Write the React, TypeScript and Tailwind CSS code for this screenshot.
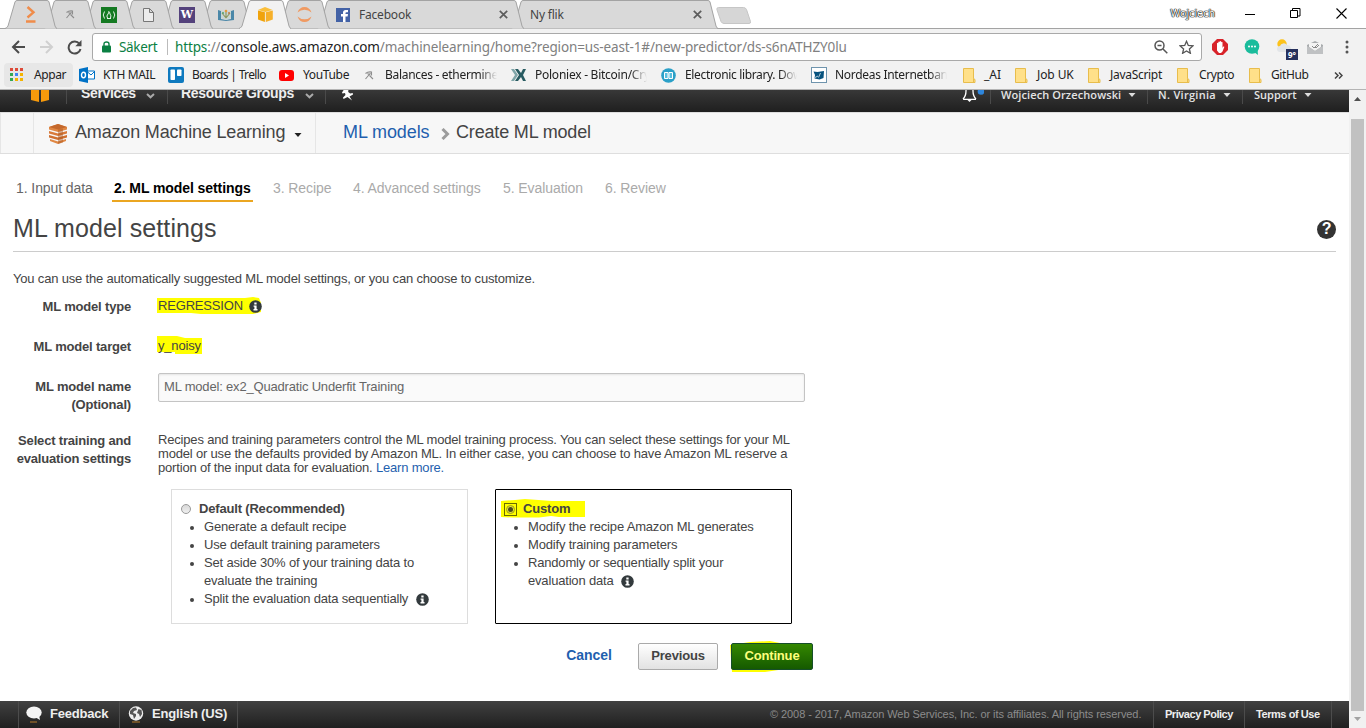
import type { ReactNode } from "react";

const UI = "font-['Noto_Sans','Open_Sans',sans-serif]";

function TabShape({ w, active }: { w: number; active?: boolean }) {
  return (
    <svg className="absolute left-0 top-0" width={w} height={29} viewBox={`0 0 ${w} 29`}>
      <path
        d={`M0 28.5 Q2 28 3 26 L10 2 Q10.5 0.5 12 0.5 H${w - 10} Q${w - 8.5} 0.5 ${w - 8} 2 L${w - 2} 26 Q${w - 1} 28.5 ${w} 28.5`}
        fill={active ? "#f2f2f2" : "#d9d9d9"}
        stroke="#a3a3a3"
      />
      {active && <rect x="1" y="28" width={w - 2} height="1" fill="#f2f2f2" />}
    </svg>
  );
}

function SmallTab({ z, active, children }: { z: string; active?: boolean; children: ReactNode }) {
  return (
    <div className={`relative -mr-[13px] h-[29px] w-[52px] shrink-0 ${z}`}>
      <TabShape w={52} active={active} />
      <div className="relative flex h-[29px] items-center justify-center">{children}</div>
    </div>
  );
}

function WideTab({ z, icon, title }: { z: string; icon?: ReactNode; title: string }) {
  return (
    <div className={`relative -mr-[13px] h-[29px] w-[207px] shrink-0 ${z}`}>
      <TabShape w={207} />
      <div className="relative flex h-[29px] items-center pl-[19px] pr-[16px]">
        {icon && <span className="mr-[7px] flex w-4">{icon}</span>}
        <span className="flex-1 text-[12px] tracking-[-0.2px] text-[#444]">{title}</span>
        <svg width="9" height="9" viewBox="0 0 9 9" stroke="#5c5c5c" strokeWidth="1.7">
          <path d="M.8.8l7.4 7.4M8.2.8L.8 8.2" />
        </svg>
      </div>
    </div>
  );
}

function Pickaxe() {
  return (
    <svg width="9" height="9" viewBox="0 0 9 9" fill="none" stroke="#8d8d8d" strokeWidth="1.1">
      <path d="M.5 2.500Q3 .5 6.500 1v3.500M5.500 2L.5 8M2.500 2.500l3 2M4.500 4.500L8 8" />
    </svg>
  );
}

function Folder() {
  return (
    <svg width="14" height="15" viewBox="0 0 14 15" className="ml-[2px]">
      <path d="M.5.500h10v10l1.500 1v3H.5z" fill="#ffe089" stroke="#e8bd4c" />
      <path d="M10.500 10.500v3.500" stroke="#e8bd4c" />
    </svg>
  );
}

function Bookmark({ w, icon, label, track = "", fade }: { w: string; icon: ReactNode; label: string; track?: string; fade?: boolean }) {
  return (
    <div className={`flex h-full shrink-0 items-center ${w}`}>
      <span className="flex w-6 shrink-0 items-center">{icon}</span>
      <span
        className={`whitespace-nowrap text-[12px] text-[#222] ${track} ${
          fade ? "w-[112px] overflow-hidden [mask-image:linear-gradient(to_right,#000_85%,transparent)]" : ""
        }`}
      >
        {label}
      </span>
    </div>
  );
}

function AppGrid() {
  const colors = ["#dd4b39", "#dd4b39", "#dd4b39", "#34a853", "#4285f4", "#f4b400", "#34a853", "#f4b400", "#f4b400"];
  return (
    <svg width="14" height="14" viewBox="0 0 14 14">
      {colors.map((c, i) => (
        <rect key={i} x={(i % 3) * 5} y={Math.floor(i / 3) * 5} width="3" height="3" fill={c} />
      ))}
    </svg>
  );
}

function Info() {
  return (
    <svg width="13" height="13" viewBox="0 0 13 13">
      <circle cx="6.500" cy="6.500" r="6.300" fill="#333a3d" />
      <rect x="5.300" y="2.500" width="2.300" height="2" fill="#fff" />
      <path d="M4.600 5.400h3v3.700h.9v1.300H4.500V9.100h.9V6.700h-.8z" fill="#fff" />
    </svg>
  );
}

function Chevron() {
  return (
    <svg width="9" height="6" viewBox="0 0 9 6" fill="none" stroke="#aaa" strokeWidth="2">
      <path d="M1 1l3.500 3.300L8 1" />
    </svg>
  );
}

function Caret({ color = "#ddd" }: { color?: string }) {
  return (
    <svg width="8" height="4" viewBox="0 0 8 4" fill={color}>
      <path d="M.5 0h7L4 4z" />
    </svg>
  );
}

function NavDivider() {
  return <div className="h-[14px] w-px shrink-0 self-start bg-[#4a4a4a]" />;
}

function TabStrip() {
  return (
    <div className="relative flex h-[29px] items-start bg-white pl-[5px] shadow-[inset_0_-1px_0_#a3a3a3]">
      <SmallTab z="z-[9]">
        <svg width="12" height="17" viewBox="0 0 12 17" fill="none" stroke="#f08c4a" strokeWidth="2.400">
          <path d="M2.500 1l6 5.300-6 5.200M1 15.500h9.500" />
        </svg>
      </SmallTab>
      <SmallTab z="z-[8]"><Pickaxe /></SmallTab>
      <SmallTab z="z-[7]">
        <svg width="16" height="16" viewBox="0 0 16 16" fill="none" stroke="#fff" strokeWidth=".9">
          <rect width="16" height="16" fill="#157a22" stroke="none" />
          <path d="M3.500 4.500Q1 8 3.500 11.500M12.500 4.500q2.500 3.500 0 7M6 11.500h4M6.500 11Q5 9 7 7q1-1 .8-2.500Q9 5.500 9 7q1.500 1.500.5 4" />
        </svg>
      </SmallTab>
      <SmallTab z="z-[6]">
        <svg width="11" height="14" viewBox="0 0 11 14" fill="#ececec" stroke="#777" className="ml-px">
          <path d="M.5.500h6l4 4v9H.5zM6.500.500v4h4" />
        </svg>
      </SmallTab>
      <SmallTab z="z-[5]">
        <span className="flex h-4 w-4 items-center justify-center bg-[#54427c] font-['DejaVu_Serif',serif] text-[11px] font-bold leading-4 text-white">W</span>
      </SmallTab>
      <SmallTab z="z-[4]">
        <svg width="16" height="12" viewBox="0 0 16 12">
          <path d="M0 1l3 1v8l5 1 5-1V2l3-1v10l-8 1-8-1z" fill="#4a87a8" />
          <path d="M3 1l5 2 5-2v8l-5 2-5-2z" fill="#c9d6d4" />
          <path d="M8 9L4 4M8 9l4-5M8 9V3" stroke="#8e9a64" strokeWidth="1.200" />
          <circle cx="8" cy="2" r="1.300" fill="#e59a3a" />
          <circle cx="5" cy="4" r="1" fill="#5a9f6a" />
          <circle cx="11" cy="4" r="1" fill="#c27648" />
        </svg>
      </SmallTab>
      <SmallTab z="z-[10]" active>
        <svg width="15" height="15" viewBox="0 0 15 15">
          <path d="M0 3l7-3 7.500 3-7.200 2z" fill="#fbbf3a" />
          <path d="M0 3.500l6.900 1.700V15L0 12.500z" fill="#f0a30c" />
          <path d="M7.800 5.200l7-1.700v9l-7 2.500z" fill="#f6b02a" />
        </svg>
      </SmallTab>
      <SmallTab z="z-[3]">
        <svg width="15" height="15" viewBox="0 0 15 15" fill="#f09a62">
          <path d="M.5 5.500Q2.500 0 7.500 0t7 5.500Q11.500 2.700 7.500 2.700T.5 5.500zM.5 9.500q3 2.800 7 2.800t7-2.800Q12.500 15 7.500 15T.5 9.500z" />
        </svg>
      </SmallTab>
      <WideTab
        z="z-[2]"
        title="Facebook"
        icon={
          <svg width="14" height="14" viewBox="0 0 14 14">
            <rect width="14" height="14" fill="#4362a6" />
            <path d="M7 14V8.500H5V6h2V4.500Q7 2 9.700 2H12v2.200h-1.500Q9.500 4.200 9.500 5v1H12l-.4 2.500H9.500V14z" fill="#fff" />
          </svg>
        }
      />
      <WideTab z="z-[1]" title="Ny flik" />
      <svg width="36" height="18" viewBox="0 0 36 18" className="ml-[11px] mt-[7px]">
        <path d="M2.500.500h25q2 0 3 2l4 12q.5 2-1.500 2H8q-2 0-3-2L.9 2.500Q.5.500 2.500.500z" fill="#d6d6d6" stroke="#c6c6c6" />
      </svg>
      <div className="flex h-[27px] flex-1 items-center justify-end pr-[19px]">
        <span className="mr-[30px] text-[10.500px] tracking-[0.1px] text-white [text-shadow:0_0_1px_#000,0_0_1px_#000,0_0_1px_#333,0_0_1px_#333]">Wojciech</span>
        <svg width="10" height="10" className="mr-[35px]"><path d="M0 5.500h10" stroke="#000" /></svg>
        <svg width="11" height="11" fill="none" stroke="#000" className="mr-[35px]">
          <path d="M.5 2.500h7v7h-7zM2.500 2.500v-2h7.500v7.500H8" />
        </svg>
        <svg width="11" height="11" stroke="#000" strokeWidth="1.100"><path d="M.5.500l10 10M10.500.500l-10 10" /></svg>
      </div>
    </div>
  );
}

function Toolbar() {
  return (
    <div className="flex h-[33px] items-center bg-[#f2f2f2] pl-[11px] pt-[3px]">
      <svg width="15" height="14" viewBox="0 0 15 14" fill="none" stroke="#4c4c4c" strokeWidth="2"><path d="M14 7H2M8 1L2 7l6 6" /></svg>
      <svg width="15" height="14" viewBox="0 0 15 14" fill="none" stroke="#d0d0d0" strokeWidth="2" className="ml-[13px]"><path d="M1 7h12M7 1l6 6-6 6" /></svg>
      <svg width="15" height="15" viewBox="0 0 15 15" fill="none" stroke="#4c4c4c" strokeWidth="2" className="ml-[13px]">
        <path d="M12.500 4A6 6 0 1 0 13.500 9" />
        <path d="M14.500 0v6.200H8.300z" fill="#4c4c4c" stroke="none" />
      </svg>
      <div className="ml-[10px] flex h-[28px] w-[1110px] shrink-0 items-center rounded-[3px] border border-[#a9a9a9] bg-white pl-[9px] pr-[7px] text-[13.500px]">
        <svg width="9" height="12" viewBox="0 0 9 12"><rect y="4.500" width="9" height="7" rx="1" fill="#0b8043" /><path d="M2 5V3Q2 1 4.500 1T7 3v2" fill="none" stroke="#0b8043" strokeWidth="1.400" /></svg>
        <span className="ml-[8px] w-[48px] whitespace-nowrap text-[#0b8043] tracking-[-0.35px]">Säkert</span>
        <span className="h-4 w-px bg-[#bbb]" />
        <span className="ml-[7px] flex-1 whitespace-nowrap tracking-[-0.13px] text-[#808080]">
          <span className="text-[#0b8043]">https</span>://<span className="text-[#222]">console.aws.amazon.com</span>/machinelearning/home?region=us-east-1#/new-predictor/ds-s6nATHZY0lu
        </span>
        <svg width="14" height="14" viewBox="0 0 14 14" fill="none" stroke="#555" strokeWidth="1.500"><circle cx="5.500" cy="5.500" r="4.500" /><path d="M9 9l4.300 4.300M3.500 5.500h4" /></svg>
        <svg width="15" height="14" viewBox="0 0 15 14" fill="none" stroke="#555" strokeWidth="1.300" className="ml-[11px]"><path d="M7.500 1.300l1.800 4.200 4.500.4-3.400 3 1 4.400-3.900-2.300-3.900 2.300 1-4.400-3.400-3 4.500-.4z" /></svg>
      </div>
      <svg width="16" height="16" viewBox="0 0 16 16" className="ml-[10px] shrink-0">
        <path d="M5 0h6l5 5v6l-5 5H5l-5-5V5z" fill="#d8232a" />
        <path d="M5 8V4.200q.7-.9 1.300 0V3q.7-.9 1.400 0v-.5q.8-.9 1.400 0V3.200q.8-.9 1.400 0V9l.7-1.500 1.200.3L10.500 12.500 9 14H7L5 11.500z" fill="#fff" />
      </svg>
      <svg width="16" height="16" viewBox="0 0 16 16" className="ml-[16px] shrink-0">
        <circle cx="8" cy="7.500" r="7.300" fill="#1abc9c" /><path d="M10 13l4 3-.5-5z" fill="#1abc9c" />
        <g fill="#fff"><circle cx="5" cy="7.500" r="1" /><circle cx="8" cy="7.500" r="1" /><circle cx="11" cy="7.500" r="1" /></g>
      </svg>
      <div className="relative ml-[16px] h-[20px] w-[22px] shrink-0">
        <svg width="16" height="14" viewBox="0 0 16 14" className="mt-[2px]">
          <circle cx="6" cy="5" r="4.700" fill="#fcc21b" /><path d="M4 13a3 3 0 0 1 0-6 4 4 0 0 1 7-1 3.700 3.700 0 0 1 2 7z" fill="#e2e5e8" />
        </svg>
        <span className="absolute left-[10px] top-[12px] flex h-[11px] w-[12px] items-center justify-center bg-[#26305c] text-[8px] font-bold leading-none text-white">9°</span>
      </div>
      <svg width="16" height="13" viewBox="0 0 16 13" className="ml-[9px] shrink-0">
        <path d="M0 4l8-4 8 4v9H0z" fill="#a9acae" /><path d="M2 2h12v4l-6 4-6-4z" fill="#f3f3f3" /><path d="M0 5l8 5 8-5v8H0z" fill="#bfc1c3" /><path d="M5 5l2 2 4-4M8 6l1 1 3-3" fill="none" stroke="#888" />
      </svg>
      <svg width="4" height="14" viewBox="0 0 4 14" fill="#555" className="ml-[22px] shrink-0"><circle cx="2" cy="2" r="1.500" /><circle cx="2" cy="7" r="1.500" /><circle cx="2" cy="12" r="1.500" /></svg>
    </div>
  );
}

function Bookmarks() {
  return (
    <div className="flex h-[28px] items-center border-b border-[#b4b4b4] bg-[#f2f2f2] pb-px pl-[4px]">
      <div className="mr-[6px] flex h-[24px] w-[69px] shrink-0 items-center rounded-sm bg-[#e7e7e7] pl-[6px]">
        <AppGrid /><span className="ml-[10px] text-[12px] text-[#222] tracking-[-0.4px]">Appar</span>
      </div>
      <Bookmark w="w-[89px]" label="KTH MAIL" track="tracking-[-0.35px]" icon={
        <svg width="16" height="16" viewBox="0 0 16 16"><path d="M8 4h7.500v8H8z" fill="#fff" stroke="#0072c6" /><path d="M8 4.500l4 3.500 3.500-3.500" fill="none" stroke="#0072c6" /><path d="M0 2l9-2v16l-9-2z" fill="#0072c6" /><ellipse cx="4.500" cy="8" rx="2" ry="2.700" fill="none" stroke="#fff" strokeWidth="1.400" /></svg>
      } />
      <Bookmark w="w-[111px]" label="Boards | Trello" track="tracking-[-0.65px]" icon={
        <svg width="16" height="16" viewBox="0 0 16 16"><rect width="16" height="16" rx="2" fill="#0f7abf" /><rect x="2.500" y="2.500" width="4.500" height="10.500" rx=".8" fill="#fff" /><rect x="9" y="2.500" width="4.500" height="6.500" rx=".8" fill="#fff" /></svg>
      } />
      <Bookmark w="w-[82px]" label="YouTube" track="tracking-[-0.35px]" icon={
        <svg width="15" height="11" viewBox="0 0 15 11"><rect width="15" height="11" rx="3" fill="#f00" /><path d="M6 3l4 2.500L6 8z" fill="#fff" /></svg>
      } />
      <Bookmark w="w-[150px]" label="Balances - ethermine" track="tracking-[-0.3px]" fade icon={<span className="ml-1"><Pickaxe /></span>} />
      <Bookmark w="w-[150px]" label="Poloniex - Bitcoin/Cry" track="tracking-[-0.25px]" fade icon={
        <svg width="16" height="12" viewBox="0 0 16 12" fill="#285b61"><path d="M0 0h3l4 6-4 6H0l4-6z" fill="#7fa5a8" /><path d="M4 0h3l3 4 2-4h3l-3 6 3 6h-3l-2-4-3 4H4l4-6z" /></svg>
      } />
      <Bookmark w="w-[150px]" label="Electronic library. Dow" track="tracking-[-0.35px]" fade icon={
        <svg width="15" height="15" viewBox="0 0 15 15"><circle cx="7.500" cy="7.500" r="7.300" fill="#2aa0c8" /><path d="M3.500 4.500h3.500v6H3.500zM8 4.500h3.500v6H8z" fill="#58bede" stroke="#fff" /></svg>
      } />
      <Bookmark w="w-[150px]" label="Nordeas Internetbank" track="tracking-[-0.3px]" fade icon={
        <svg width="16" height="16" viewBox="0 0 16 16"><rect x=".5" y=".5" width="15" height="15" fill="#fff" stroke="#6f94ad" /><path d="M2.500 4.500l4 .5 6.500-1-.5 7-4 1.500-5-1L4 8z" fill="#06527e" /><path d="M9.500 6l-2 4.500M4 10.500l3-1.500" stroke="#fff" strokeWidth=".7" /></svg>
      } />
      <Bookmark w="w-[52px]" label="_AI" track="-ml-px" icon={<Folder />} />
      <Bookmark w="w-[73px]" label="Job UK" track="tracking-[-0.1px]" icon={<Folder />} />
      <Bookmark w="w-[89px]" label="JavaScript" track="tracking-[-0.3px]" icon={<Folder />} />
      <Bookmark w="w-[72px]" label="Crypto" track="tracking-[-0.4px]" icon={<Folder />} />
      <Bookmark w="w-[87px]" label="GitHub" track="tracking-[-0.4px]" icon={<Folder />} />
      <svg width="9" height="7" viewBox="0 0 9 7" fill="none" stroke="#444" strokeWidth="1.500"><path d="M1 .5l3 3-3 3M5 .5l3 3-3 3" /></svg>
    </div>
  );
}

function AwsNav() {
  const right = "whitespace-nowrap text-[11px] font-semibold leading-[13px] text-[#e4e4e4] font-['Open_Sans',sans-serif]";
  return (
    <div className="h-[22px] overflow-hidden bg-gradient-to-b from-[#383838] to-[#1f1f1f]">
      <div className="-mt-[5px] flex h-[22px] items-start">
        <svg width="18" height="14" viewBox="0 0 18 14" className="ml-[31px] mt-[3px]"><path d="M0 0h8v14l-8-2zM10 0h8v12l-8 2z" fill="#f79a0b" /></svg>
        <div className="ml-[17px] mt-[5px]"><NavDivider /></div>
        <span className="ml-[14px] w-[55px] whitespace-nowrap text-[14px] font-bold leading-[17px] tracking-[-0.35px] text-[#eee]">Services</span>
        <span className="ml-[10px] mt-[8px]"><Chevron /></span>
        <div className="ml-[12px] mt-[5px]"><NavDivider /></div>
        <span className="ml-[13px] w-[113px] whitespace-nowrap text-[14px] font-bold leading-[17px] tracking-[-0.3px] text-[#eee]">Resource Groups</span>
        <span className="ml-[11px] mt-[8px]"><Chevron /></span>
        <div className="ml-[11px] mt-[5px]"><NavDivider /></div>
        <svg width="11" height="13" viewBox="0 0 11 13" fill="#fff" className="ml-[16px] mt-[3px]"><path d="M3 0l3.500 1-.3 3 2 1.500 2.500-.5.3 1.500-3.500 2L10 12.500 5.500 9 1.500 11 1 9.500 3.500 7 3 5 .5 5.500 0 4.500z" /></svg>
        <div className="flex-1" />
        <svg width="22" height="16" viewBox="0 0 22 16" fill="none" stroke="#fff" strokeWidth="1.300" className="mt-px">
          <path d="M1 13q3-3 3-8V0M14 13q-3-3-3-8V0M1 13.300h13" /><path d="M5.500 14h4l-2 2z" fill="#fff" stroke="none" /><circle cx="19" cy="5.500" r="3.300" fill="#2e86dd" stroke="none" />
        </svg>
        <div className="ml-[6px] mt-[5px]"><NavDivider /></div>
        <span className={`ml-[10px] w-[120px] pt-[3px] tracking-[0.1px] ${right}`}>Wojciech Orzechowski</span>
        <span className="ml-[7px] mt-[8px] flex"><Caret /></span>
        <div className="ml-[11px] mt-[5px]"><NavDivider /></div>
        <span className={`ml-[10px] w-[58px] pt-[3px] tracking-[0.3px] ${right}`}>N. Virginia</span>
        <span className="ml-[7px] mt-[8px] flex"><Caret /></span>
        <div className="ml-[11px] mt-[5px]"><NavDivider /></div>
        <span className={`ml-[11px] w-[43px] pt-[3px] ${right}`}>Support</span>
        <span className="ml-[7px] mr-[37px] mt-[8px] flex"><Caret /></span>
      </div>
    </div>
  );
}

function Breadcrumbs() {
  return (
    <div className="flex h-[42px] border-b border-t border-[#dedede] bg-[#f7f7f7] text-[18px] leading-[38px] text-[#444]">
      <div className="w-[34px] border-x border-[#e6e6e6]" />
      <div className="flex w-[282px] items-start border-r border-[#e6e6e6] pl-[15px]">
        <svg width="18" height="20" viewBox="0 0 18 20" className="mt-[11px]">
          <path d="M9 0l9 3v2.500L9 8 0 5.500V3z" fill="#e08743" /><path d="M9 0l9 3-9 2.500L0 3z" fill="#c4682c" />
          <path d="M0 7l9 2.500L18 7v2.500L9 12 0 9.500z" fill="#d97a3a" /><path d="M0 11l9 2.500 9-2.500v2.500L9 16l-9-2.500z" fill="#cf7030" /><path d="M1 15l8 2.500 8-2.500v2L9 20l-8-3z" fill="#e08743" /><path d="M9 5.500v14.500l5-1.500V4.500z" fill="#a8541d" opacity=".45" />
        </svg>
        <span className="ml-[8px] w-[211px] whitespace-nowrap tracking-[-0.17px]">Amazon Machine Learning</span>
        <span className="ml-[8px] mt-[20px] flex"><Caret color="#222" /></span>
      </div>
      <span className="ml-[27px] w-[87px] whitespace-nowrap tracking-[-0.1px] text-[#1f5fae]">ML models</span>
      <svg width="9" height="12" viewBox="0 0 9 12" className="ml-[11px] mt-[15px]" fill="none" stroke="#9c9c9c" strokeWidth="3"><path d="M1.500 1l5 5-5 5" /></svg>
      <span className="ml-[6px] whitespace-nowrap tracking-[-0.17px]">Create ML model</span>
    </div>
  );
}

function OptionCard({ title, active, children }: { title: string; active?: boolean; children: ReactNode }) {
  return (
    <div className={`h-[135px] w-[297px] border pl-[9px] pt-[10px] leading-[18px] ${active ? "rounded-[1px] border-black" : "border-[#ddd]"}`}>
      <div className="relative flex h-[18px] items-center">
        {active && (
          <svg className="absolute -left-[4px] -top-px" width="84" height="20" viewBox="0 0 84 20" fill="#ff0">
            <path d="M0 2l14-1L24 0l27 2h33v16H58l-8-1-12 1.500H12L0 18z" />
          </svg>
        )}
        {active ? (
          <span className="relative -ml-px flex h-[13px] w-[13px] items-center justify-center border border-[#6b6b00]">
            <span className="flex h-[9px] w-[9px] items-center justify-center rounded-full border border-[#a0a010] bg-[#e4e43a]"><span className="h-[5px] w-[5px] rounded-full bg-[#4a4a20]" /></span>
          </span>
        ) : (
          <span className="h-[10px] w-[10px] rounded-full border border-[#999] bg-gradient-to-b from-[#d8d8d8] to-[#f0f0f0]" />
        )}
        <span className={`relative font-bold ${active ? "ml-[6px]" : "ml-[8px]"}`}>{title}</span>
      </div>
      <ul className="pl-[23px]">{children}</ul>
    </div>
  );
}

function Item({ children }: { children: ReactNode }) {
  return (
    <li className="relative whitespace-nowrap">
      <span className="absolute -left-[14px] top-[8px] h-[4px] w-[4px] rounded-full bg-[#444]" />
      {children}
    </li>
  );
}

function Row({ label, h, children }: { label: ReactNode; h: string; children: ReactNode }) {
  return (
    <div className={`flex ${h}`}>
      <div className="w-[131px] shrink-0 whitespace-nowrap text-right font-bold leading-[18px]">{label}</div>
      <div className="ml-[27px] flex-1">{children}</div>
    </div>
  );
}

function Content() {
  const step = "h-[28px] whitespace-nowrap px-[2px] leading-[29px]";
  return (
    <div className="flex-1 pt-[20px] text-[13px] tracking-[-0.18px] text-[#444]">
      <div className="flex pl-[14px] text-[14px] tracking-[-0.08px] text-[#aaa]">
        <span className={`w-[98px] text-[#666] ${step}`}>1. Input data</span>
        <span className={`mr-[18px] w-[141px] border-b-2 border-[#eba621] font-bold text-black ${step}`}>2. ML model settings</span>
        <span className={`w-[80px] ${step}`}>3. Recipe</span>
        <span className={`w-[150px] ${step}`}>4. Advanced settings</span>
        <span className={`w-[102px] ${step}`}>5. Evaluation</span>
        <span className={step}>6. Review</span>
      </div>
      <div className="ml-[13px] mr-[13px] flex h-[50px] items-center border-b border-[#ccc]">
        <h1 className="flex-1 pt-[3px] text-[25px] leading-[30px] tracking-[0.1px]">ML model settings</h1>
        <span className="mt-[5px] flex h-[19px] w-[19px] items-center justify-center rounded-full bg-[#333] text-[16px] font-bold leading-none text-white">?</span>
      </div>
      <p className="ml-[13px] mt-[18px] h-[28px] leading-[18px]">You can use the automatically suggested ML model settings, or you can choose to customize.</p>
      <Row label="ML model type" h="h-[40px]">
        <div className="relative -mt-px flex h-[18px] items-center">
          <svg className="absolute -left-px top-0" width="106" height="17" fill="#ff0"><path d="M0 1h88l8-1 6 1 2 5v9l-8 2H44l-10-1H0z" /></svg>
          <span className="relative w-[91px]">REGRESSION</span>
          <span className="relative"><Info /></span>
        </div>
      </Row>
      <Row label="ML model target" h="h-[40px]">
        <div className="relative -mt-px h-[18px] leading-[18px]">
          <svg className="absolute -left-px -top-px" width="46" height="19" fill="#ff0"><path d="M0 0h20l8 2h17v16H18v-2H0z" /></svg>
          <span className="relative">y_noisy</span>
        </div>
      </Row>
      <Row label={<>ML model name<br />(Optional)</>} h="h-[54px]">
        <div className="-mt-[5px] h-[29px] w-[647px] rounded-[2px] border border-[#c4c4c4] bg-[#fafafa] pl-[5px] leading-[25px] text-[#666] shadow-[inset_0_1px_2px_#e4e4e4]">
          ML model: ex2_Quadratic Underfit Training
        </div>
      </Row>
      <Row label={<>Select training and<br />evaluation settings</>} h="h-[57px]">
        <p className="pt-px leading-[14px]">
          Recipes and training parameters control the ML model training process. You can select these settings for your ML<br />
          model or use the defaults provided by Amazon ML. In either case, you can choose to have Amazon ML reserve a<br />
          portion of the input data for evaluation. <span className="text-[#1f5fae]">Learn more.</span>
        </p>
      </Row>
      <div className="ml-[171px] flex gap-[27px]">
        <OptionCard title="Default (Recommended)">
          <Item>Generate a default recipe</Item>
          <Item>Use default training parameters</Item>
          <Item>Set aside 30% of your training data to<br />evaluate the training</Item>
          <Item><span className="flex items-center">Split the evaluation data sequentially<span className="ml-[8px]"><Info /></span></span></Item>
        </OptionCard>
        <OptionCard title="Custom" active>
          <Item>Modify the recipe Amazon ML generates</Item>
          <Item>Modify training parameters</Item>
          <Item>Randomly or sequentially split your<span className="flex items-center">evaluation data<span className="ml-[8px]"><Info /></span></span></Item>
        </OptionCard>
      </div>
      <div className="ml-[566px] mt-[19px] flex h-[27px] items-center text-center text-[13px] font-bold">
        <span className="w-[46px] pb-[2px] text-[14px] tracking-[-0.05px] text-[#1f5fae]">Cancel</span>
        <span className="ml-[26px] h-[27px] w-[80px] rounded-[2px] border border-[#aaa] bg-gradient-to-b from-white to-[#e2e2e2] leading-[24px]">Previous</span>
        <div className="relative ml-[13px] h-[27px] w-[82px]">
          <svg className="absolute -left-px -top-[2px]" width="60" height="32" fill="#ff0"><path d="M0 4l20-3 20-1 15 3v25l-20 3H2z" /></svg>
          <div className="relative h-[27px] rounded-[2px] border border-[#154e2a] bg-gradient-to-b from-[#348800] to-[#155a00] leading-[24px] text-[#ffff7c]">Continue</div>
        </div>
      </div>
    </div>
  );
}

function Footer() {
  const line = "h-full w-px shrink-0 bg-[#4c4c4c]";
  return (
    <div className="flex h-[27px] shrink-0 items-center bg-gradient-to-b from-[#414141] to-[#202020] text-[13px] font-bold text-[#eee]">
      <div className={`ml-[18px] ${line}`} />
      <svg width="16" height="17" viewBox="0 0 16 17" className="ml-[7px]"><ellipse cx="8" cy="6.500" rx="7.700" ry="6" fill="#f4f4f4" /><path d="M9 11l5 3-1-5z" fill="#f4f4f4" /><path d="M4 16h7" stroke="#b77a2a" /></svg>
      <span className="ml-[8px] w-[59px] whitespace-nowrap pb-px tracking-[-0.2px]">Feedback</span>
      <div className={`ml-[10px] ${line}`} />
      <svg width="16" height="17" viewBox="0 0 16 17" className="ml-[8px]"><circle cx="8" cy="7.500" r="7.200" fill="#eee" /><path d="M2 5l3-3 3-.5L9 4 6 5 5 7l3 1v2l-2 3-1-4-3-1zM10.500 3l3 1 .5 4-2 3-1-3-2-1z" fill="#555" /><path d="M4 16h8" stroke="#b77a2a" /></svg>
      <span className="ml-[8px] w-[76px] whitespace-nowrap pb-px tracking-[-0.18px]">English (US)</span>
      <div className={`ml-[9px] ${line}`} />
      <div className="flex-1" />
      <span className="w-[371px] whitespace-nowrap text-[11px] font-normal tracking-[-0.07px] text-[#8c8c8c]">© 2008 - 2017, Amazon Web Services, Inc. or its affiliates. All rights reserved.</span>
      <div className={`ml-[12px] ${line}`} />
      <span className="ml-[11px] w-[68px] whitespace-nowrap text-[11px] tracking-[-0.48px]">Privacy Policy</span>
      <div className={`ml-[11px] ${line}`} />
      <span className="ml-[11px] w-[64px] whitespace-nowrap text-[11px] tracking-[-0.43px]">Terms of Use</span>
      <div className={`ml-[11px] mr-[17px] ${line}`} />
    </div>
  );
}

export default function App() {
  return (
    <div className="flex h-[728px] w-[1366px] flex-col overflow-hidden bg-white">
      <div className={UI}>
        <TabStrip />
        <Toolbar />
        <Bookmarks />
      </div>
      <div className="flex min-h-0 flex-1">
        <div className="flex w-[1349px] flex-col font-['Liberation_Sans',Arial,sans-serif]">
          <AwsNav />
          <Breadcrumbs />
          <Content />
          <Footer />
        </div>
        <div className="flex w-[17px] flex-col items-center bg-[#f1f1f1] py-[7px]">
          <svg width="7" height="4" fill="#505050"><path d="M0 4h7L3.500 0z" /></svg>
          <div className="mt-[18px] w-[13px] flex-1 bg-[#c1c1c1]" />
          <svg width="7" height="4" fill="#a3a3a3" className="mt-[6px]"><path d="M0 0h7L3.500 4z" /></svg>
        </div>
      </div>
    </div>
  );
}
